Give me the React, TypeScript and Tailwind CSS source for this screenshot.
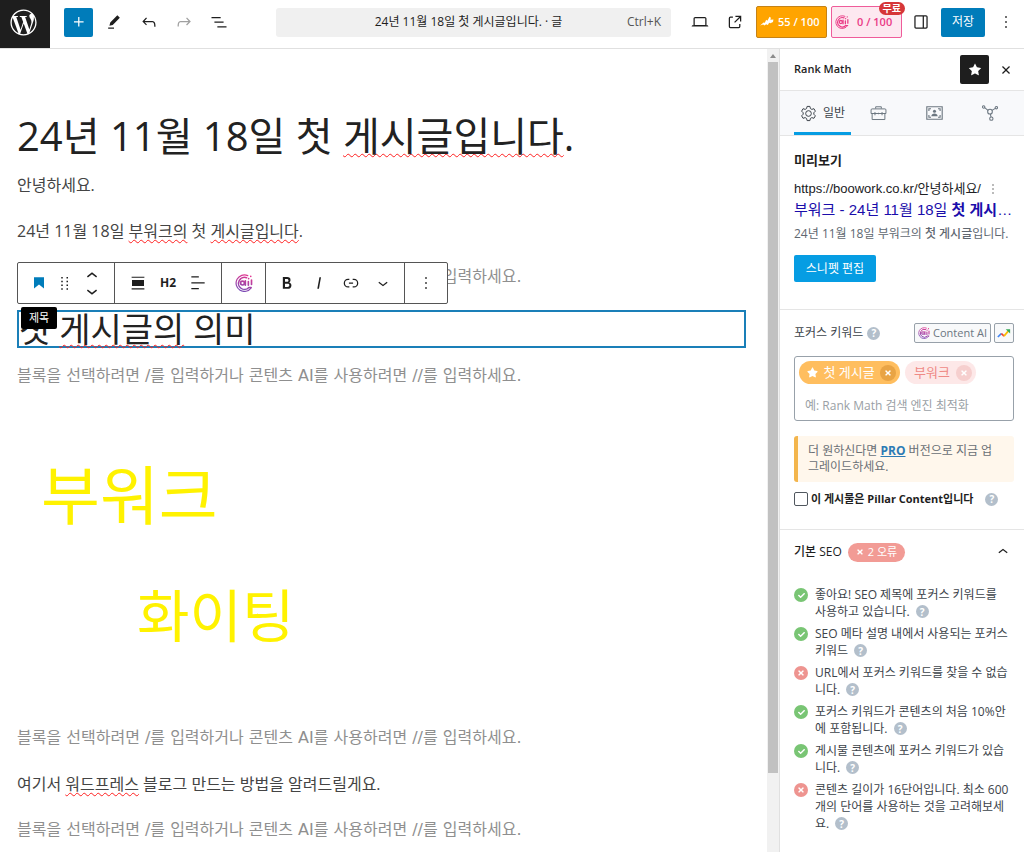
import type { ReactNode } from 'react';
import { FaCheck, FaStar, FaTimes, FaWordpressSimple } from 'react-icons/fa';

const icons = {
  plus: 'M11 12.5V17.5H12.5V12.5H17.5V11H12.5V6H11V11H6V12.5H11Z',
  edit: 'm19 7-3-3-8.5 8.5-1 4 4-1L19 7Zm-7 11.5H5V20h7v-1.5Z',
  undo: 'M18.3 11.7c-.6-.6-1.4-.9-2.3-.9H6.7l2.9-3.3-1.1-1-4.5 5L8.5 16l1-1-2.7-2.7H16c.5 0 .9.2 1.3.5 1 1 1 3.4 1 4.5v.3h1.5v-.2c0-1.5 0-4.3-1.5-5.7z',
  redo: 'M15.6 6.5l-1.1 1 2.9 3.3H8c-.9 0-1.7.3-2.3.9-1.4 1.5-1.4 4.2-1.4 5.6v.2h1.5v-.3c0-1.1 0-3.5 1-4.5.3-.3.7-.5 1.3-.5h9.2L14.5 15l1.1 1.1 4.6-4.6-4.6-5z',
  listView: 'M3 6h11v1.5H3V6Zm3.5 5.5h11V13h-11v-1.5ZM21 17H10v1.5h11V17Z',
  laptop: 'M20.5 16h-.7V8c0-1.1-.9-2-2-2H6.2c-1.1 0-2 .9-2 2v8h-.7c-.8 0-1.5.7-1.5 1.5h20c0-.8-.7-1.5-1.5-1.5zM5.7 8c0-.3.2-.5.5-.5h11.6c.3 0 .5.2.5.5v7.6H5.7V8z',
  external: 'M19.5 4.5h-7V6h4.44l-5.97 5.97 1.06 1.06L18 7.06v4.44h1.5v-7Zm-13 1a2 2 0 0 0-2 2v10a2 2 0 0 0 2 2h10a2 2 0 0 0 2-2v-3H17v3a.5.5 0 0 1-.5.5h-10a.5.5 0 0 1-.5-.5v-10a.5.5 0 0 1 .5-.5h3V5.5h-3Z',
  drawer: 'M18 4H6c-1.1 0-2 .9-2 2v12c0 1.1.9 2 2 2h12c1.1 0 2-.9 2-2V6c0-1.1-.9-2-2-2zm-4 14.5H6c-.3 0-.5-.2-.5-.5V6c0-.3.2-.5.5-.5h8v13zm4.5-.5c0 .3-.2.5-.5.5h-2.5v-13H18c.3 0 .5.2.5.5v12z',
  more: 'M13 19h-2v-2h2v2zm0-6h-2v-2h2v2zm0-6h-2V5h2v2z',
  star: 'M11.776 4.454a.25.25 0 01.448 0l2.069 4.192a.25.25 0 00.188.137l4.626.672a.25.25 0 01.139.426l-3.348 3.263a.25.25 0 00-.072.222l.79 4.607a.25.25 0 01-.362.263l-4.138-2.175a.25.25 0 00-.232 0l-4.138 2.175a.25.25 0 01-.363-.263l.79-4.607a.25.25 0 00-.071-.222L4.754 9.881a.25.25 0 01.139-.426l4.626-.672a.25.25 0 00.188-.137l2.069-4.192z',
  close: 'M12 13.06l3.712 3.713 1.061-1.06L13.061 12l3.712-3.712-1.06-1.06L12 10.938 8.288 7.227l-1.061 1.06L10.939 12l-3.712 3.712 1.06 1.061L12 13.061z',
  heading: 'M6 5V18.5911L12 13.8473L18 18.5911V5H6Z',
  drag: 'M7 6h2V4H7v2zm0 5h2V9H7v2zm0 5h2v-2H7v2zm0 5h2v-2H7v2zm7-17v2h2V4h-2zm0 7h2V9h-2v2zm0 5h2v-2h-2v2zm0 5h2v-2h-2v2z',
  up: 'M6.5 12.4L12 8l5.5 4.4-.9 1.2L12 10l-4.5 3.6-1-1.2z',
  down: 'M17.5 11.6L12 16l-5.5-4.4.9-1.2L12 14l4.5-3.6 1 1.2z',
  align: 'M20.5 5h-17V3.5h17V5ZM20.5 20.5h-17V19h17v1.5ZM4 8h16v8H4V8Z',
  textLeft: 'M13 5.5H4V4h9v1.5Zm7 7H4V11h16v1.5Zm-7 7H4V18h9v1.5Z',
  bold: 'M14.7 11.3c1-.6 1.5-1.6 1.5-3 0-2.3-1.3-3.4-4-3.4H7v14h5.8c1.4 0 2.5-.3 3.3-1 .8-.7 1.2-1.7 1.2-2.9.1-1.9-.8-3.1-2.6-3.7zm-5.1-4h2.3c.6 0 1.1.1 1.4.4.3.3.5.7.5 1.2s-.2 1-.5 1.2c-.3.3-.8.4-1.4.4H9.6V7.3zm4.6 9c-.4.3-1 .4-1.7.4H9.6v-3.9h2.9c.7 0 1.3.2 1.7.5.4.3.6.8.6 1.5s-.2 1.2-.6 1.5z',
  italic: 'M12.5 5L10 19h1.9l2.5-14z',
  link: 'M10 17.389H8.444A5.194 5.194 0 1 1 8.444 7H10v1.5H8.444a3.694 3.694 0 0 0 0 7.389H10v1.5ZM14 7h1.556a5.194 5.194 0 0 1 0 10.39H14v-1.5h1.556a3.694 3.694 0 0 0 0-7.39H14V7Zm-4.5 6h5v-1.5h-5V13Z',
};

function Icon({ name, className = 'size-5' }: { name: keyof typeof icons; className?: string }) {
  return (
    <svg viewBox="0 0 24 24" className={`${className} shrink-0 fill-current`} aria-hidden="true">
      <path d={icons[name]} />
    </svg>
  );
}

function ContentAiIcon({ className, stroke = 'url(#ai-gradient)' }: { className: string; stroke?: string }) {
  return (
    <svg viewBox="0 0 24 24" className={`${className} shrink-0`} fill="none" stroke={stroke} strokeLinecap="round" aria-hidden="true">
      <defs>
        <linearGradient id="ai-gradient" gradientUnits="userSpaceOnUse" x1="16" y1="0" x2="8" y2="24">
          <stop offset="0" stopColor="#e8368f" />
          <stop offset="1" stopColor="#724bb7" />
        </linearGradient>
      </defs>
      <path d="M17 2.2A11 11 0 1 0 21.5 18.5" strokeWidth="1.6" />
      <path d="M15.5 5A8 8 0 1 0 18.5 18h3" strokeWidth="2" />
      <circle cx="10" cy="12" r="2.6" strokeWidth="2.2" />
      <path d="M13.8 9v6M17.8 10v5" strokeWidth="2.2" />
      <path d="M18.2 6.2v.1M21 3.2v.1M22 8v6" strokeWidth="2.2" />
    </svg>
  );
}

function Misspelled({ children }: { children: ReactNode }) {
  return (
    <span className="underline decoration-[#ff2020] decoration-wavy decoration-1 underline-offset-2">{children}</span>
  );
}

function EmptyBlock() {
  return (
    <p className="font-['DejaVu_Sans','Noto_Sans_CJK_KR',sans-serif] text-[#8f8f8f]">
      블록을 선택하려면 /를 입력하거나 콘텐츠 AI를 사용하려면 //를 입력하세요.
    </p>
  );
}

function HelpMark({ className = '' }: { className?: string }) {
  return (
    <button
      type="button"
      aria-label="도움말"
      className={`inline-flex size-[13px] shrink-0 items-center justify-center rounded-full bg-[#b3bfcb] text-[10px] leading-3 font-bold text-white ${className}`}
    >
      ?
    </button>
  );
}

function TopBar() {
  return (
    <header className="flex h-[49px] shrink-0 items-center border-b border-[#e0e0e0] pr-1 pb-1 text-[#1e1e1e]">
      <a href="#dashboard" aria-label="WordPress" className="flex h-12 w-[50px] shrink-0 items-center justify-center self-start bg-[#1e1e1e] pr-1 pb-1 text-white">
        <FaWordpressSimple size={27} />
      </a>
      <div className="ml-[14px] flex items-center gap-[6px]">
        <button type="button" aria-label="블록 삽입" className="flex size-[29px] items-center justify-center rounded-[2px] bg-[#007cba] text-white">
          <Icon name="plus" />
        </button>
        <button type="button" aria-label="도구" className="flex size-[29px] items-center justify-center">
          <Icon name="edit" />
        </button>
        <button type="button" aria-label="실행 취소" className="flex size-[29px] items-center justify-center">
          <Icon name="undo" />
        </button>
        <button type="button" aria-label="다시 실행" disabled className="flex size-[29px] items-center justify-center text-[#a0a0a0]">
          <Icon name="redo" />
        </button>
        <button type="button" aria-label="문서 개요" className="flex size-[29px] items-center justify-center">
          <Icon name="listView" />
        </button>
      </div>
      <button type="button" className="ml-[43px] flex h-[29px] min-w-0 flex-1 items-center rounded-[3px] bg-[#f0f0f0] px-[10px] text-xs">
        <span className="flex-1 truncate pl-6 text-center">24년 11월 18일 첫 게시글입니다. · 글</span>
        <span className="text-[#555]">Ctrl+K</span>
      </button>
      <div className="ml-[14px] flex shrink-0 items-center">
        <button type="button" aria-label="보기" className="flex w-[29px] justify-center">
          <Icon name="laptop" />
        </button>
        <button type="button" aria-label="새 탭에서 보기" className="ml-[6px] flex w-[29px] justify-center">
          <Icon name="external" />
        </button>
        <button type="button" className="ml-[7px] flex h-8 w-[71px] items-center gap-1 rounded-[2px] border border-[#c58216] bg-[#ffa400] pl-[3px] text-[11px] font-semibold text-white">
          <svg viewBox="0 0 16 14" className="h-3 w-[14px] fill-current" aria-hidden="true">
            <path d="M0 11 4 7.5l1.5.5L7 4.5l1.5 1L11 1l1.5 1L12 4.5l3.5-.5-.5 3-3 1.5-1.5-.5L9 10.500l-2-1L5 11l-1.500-1z" />
          </svg>
          <span className="whitespace-nowrap">55 / 100</span>
        </button>
        <button type="button" className="relative ml-1 flex h-8 w-[71px] items-center gap-2 rounded-[2px] border border-[#ef5c9a] bg-[#fde8f0] pl-[3px] text-[11px] font-semibold text-[#ea3a85]">
          <ContentAiIcon className="size-[14px]" stroke="#ea3a85" />
          <span className="whitespace-nowrap">0 / 100</span>
          <span className="absolute -top-[5px] -right-1 rounded-full bg-[#d63638] px-1 text-[10px] leading-[13px] text-white">무료</span>
        </button>
        <button type="button" aria-label="설정" className="ml-1 flex w-[29px] justify-center">
          <Icon name="drawer" />
        </button>
        <button type="button" className="ml-[6px] h-[29px] w-11 rounded-[2px] bg-[#007cba] text-xs text-white">저장</button>
        <button type="button" aria-label="옵션" className="ml-[6px] flex w-[29px] justify-center">
          <Icon name="more" />
        </button>
      </div>
    </header>
  );
}

function BlockToolbar() {
  return (
    <div role="toolbar" aria-label="블록 도구" className="absolute bottom-[42px] -left-[2px] flex h-[42px] divide-x divide-[#555] rounded-[2px] border border-[#555] bg-white text-[#1e1e1e]">
      <div className="flex w-[97px] items-center justify-center gap-[6px]">
        <button type="button" aria-label="제목 블록" className="text-[#007cba]"><Icon name="heading" /></button>
        <button type="button" aria-label="드래그"><Icon name="drag" className="h-[18px] w-5" /></button>
        <div className="flex flex-col">
          <button type="button" aria-label="위로 이동" className="flex h-[15px] items-center overflow-hidden"><Icon name="up" className="size-[22px]" /></button>
          <button type="button" aria-label="아래로 이동" className="flex h-[15px] items-center overflow-hidden"><Icon name="down" className="size-[22px]" /></button>
        </div>
      </div>
      <div className="flex w-[107px] items-center justify-center gap-3">
        <button type="button" aria-label="정렬"><Icon name="align" className="h-[18px] w-5" /></button>
        <button type="button" className="text-xs font-bold">H2</button>
        <button type="button" aria-label="텍스트 정렬"><Icon name="textLeft" /></button>
      </div>
      <div className="flex w-11 items-center justify-center">
        <button type="button" aria-label="Content AI"><ContentAiIcon className="size-[18px]" /></button>
      </div>
      <div className="flex w-[139px] items-center justify-center gap-3">
        <button type="button" aria-label="굵게"><Icon name="bold" /></button>
        <button type="button" aria-label="기울임꼴"><Icon name="italic" /></button>
        <button type="button" aria-label="링크"><Icon name="link" /></button>
        <button type="button" aria-label="더보기"><Icon name="down" /></button>
      </div>
      <div className="flex w-[42px] items-center justify-center">
        <button type="button" aria-label="옵션"><Icon name="more" /></button>
      </div>
    </div>
  );
}

function Editor() {
  return (
    <main className="min-w-0 flex-1 pt-[59px] pr-[21px] pb-2 pl-[17px] text-base leading-[26px] text-[#444]">
      <h1 className="text-[40px] leading-[56px] text-[#222]">
        24년 11월 18일 첫 <Misspelled>게시글입니다</Misspelled>.
      </h1>
      <div className="mt-2 flex flex-col gap-5">
        <p>안녕하세요.</p>
        <p>24년 11월 18일 <Misspelled>부워크의</Misspelled> 첫 <Misspelled>게시글입니다</Misspelled>.</p>
        <EmptyBlock />
      </div>
      <div className="relative mt-5 mb-[15px] border-2 border-[#1a7fb8] text-[#222]">
        <h2 className="text-[34px] leading-[34px]">첫 <Misspelled>게시글의</Misspelled> 의미</h2>
        <BlockToolbar />
        <span className="absolute -top-[5px] left-[2px] rounded-[2px] bg-black px-2 text-[11px] leading-[22px] text-white">제목</span>
      </div>
      <EmptyBlock />
      <figure className="mt-5 flex h-[296px] flex-col pt-[38px] pl-6 text-[#fff200]">
        <span className="text-[64px] leading-[96px]">부워크</span>
        <span className="pt-6 pl-24 text-[57px] leading-[96px]">화이팅</span>
      </figure>
      <div className="mt-5 flex flex-col gap-5">
        <EmptyBlock />
        <p>여기서 <Misspelled>워드프레스</Misspelled> 블로그 만드는 방법을 알려드릴게요.</p>
        <EmptyBlock />
      </div>
    </main>
  );
}

const seoTests = [
  { ok: true, lines: ['좋아요! SEO 제목에 포커스 키워드를', '사용하고 있습니다.'] },
  { ok: true, lines: ['SEO 메타 설명 내에서 사용되는 포커스', '키워드'] },
  { ok: false, lines: ['URL에서 포커스 키워드를 찾을 수 없습', '니다.'] },
  { ok: true, lines: ['포커스 키워드가 콘텐츠의 처음 10%안', '에 포함됩니다.'] },
  { ok: true, lines: ['게시물 콘텐츠에 포커스 키워드가 있습', '니다.'] },
  { ok: false, lines: ['콘텐츠 길이가 16단어입니다. 최소 600', '개의 단어를 사용하는 것을 고려해보세', '요.'] },
];

function Tabs() {
  return (
    <div role="tablist" className="flex h-[45px] items-stretch border-b border-[#e5e5e5] bg-[#f8f9fb] pr-[6px] pl-[14px] text-[#6c7781]">
      <button type="button" role="tab" aria-selected="true" className="flex w-[57px] items-center justify-center gap-[6px] border-b-[3px] border-[#069de3] pt-[3px] text-xs text-[#3c434a]">
        <svg viewBox="0 0 24 24" className="size-[17px]" fill="none" stroke="currentColor" strokeWidth="1.4" strokeLinejoin="round" aria-hidden="true">
          <path d="M10 2h4l.7 3 2 1.2 3-1 2 3.5-2.2 2.300v2l2.200 2.300-2 3.500-3-1-2 1.200L14 22h-4l-.7-3-2-1.200-3 1-2-3.500L4.500 13v-2L2.300 8.700l2-3.500 3 1 2-1.200z" />
          <circle cx="12" cy="12" r="4" />
        </svg>
        일반
      </button>
      <button type="button" role="tab" aria-label="고급" className="flex flex-1 items-center justify-center">
        <svg viewBox="0 0 24 24" className="size-[17px]" fill="none" stroke="currentColor" strokeWidth="1.4" aria-hidden="true">
          <path d="M3 5.5h18A1.5 1.5 0 0 1 22.5 7v5h-21V7A1.5 1.5 0 0 1 3 5.5zM3 12v8.5h18V12M8 5V2.5h8V5M7 10v4.5M17 10v4.5M12 11v2" />
        </svg>
      </button>
      <button type="button" role="tab" aria-label="스키마" className="flex flex-1 items-center justify-center">
        <svg viewBox="0 0 24 20" className="h-[14px] w-[17px]" fill="none" stroke="currentColor" strokeWidth="1.6" aria-hidden="true">
          <path d="M1 1h22v18H1zM4 7V4h3M17 4h3v3M20 13v3h-3M7 16H4v-3" />
          <path d="M7.5 14.5c0-5 9-5 9 0z" fill="currentColor" stroke="none" />
          <circle cx="12" cy="7.5" r="2.2" fill="currentColor" stroke="none" />
        </svg>
      </button>
      <button type="button" role="tab" aria-label="소셜" className="flex flex-1 items-center justify-center">
        <svg viewBox="0 0 24 24" className="size-4" fill="none" stroke="currentColor" strokeWidth="1.6" aria-hidden="true">
          <circle cx="12" cy="10" r="3.5" />
          <circle cx="14" cy="20.5" r="2.5" />
          <circle cx="21.5" cy="4" r="1.8" />
          <circle cx="2.5" cy="3" r="1.8" />
          <path d="M4 4l5 4M15 8l5-3M12.5 13.5l1 4.5" />
        </svg>
      </button>
    </div>
  );
}

function Sidebar() {
  return (
    <aside className="w-[245px] shrink-0 border-l border-[#e0e0e0] text-xs text-[#3c434a]">
      <div className="flex h-[42px] items-center border-b border-[#e5e5e5] pr-2 pl-[14px]">
        <h2 className="flex-1 text-[11px] font-semibold text-[#1e1e1e]">Rank Math</h2>
        <button type="button" aria-label="고정" className="flex size-[29px] items-center justify-center rounded-[2px] bg-[#1e1e1e] text-white">
          <Icon name="star" />
        </button>
        <button type="button" aria-label="닫기" className="ml-[7px] text-[#1e1e1e]"><Icon name="close" /></button>
      </div>
      <Tabs />

      <section className="h-[174px] border-b border-[#e5e5e5] pt-[14px] pr-[11px] pl-[14px]">
        <h3 className="text-[13px] leading-5 font-bold text-[#1e1e1e]">미리보기</h3>
        <div className="mt-[10px] flex items-center gap-1 font-['Liberation_Sans','Noto_Sans_CJK_KR',sans-serif] text-[13px] leading-[18px] text-[#202124]">
          <span className="whitespace-nowrap">https://boowork.co.kr/안녕하세요/</span>
          <button type="button" aria-label="미리보기 옵션" className="text-[#777]"><Icon name="more" className="size-4" /></button>
        </div>
        <a href="#preview" className="block truncate font-['Liberation_Sans','Noto_Sans_CJK_KR',sans-serif] text-[15px] leading-6 text-[#1a0dab]">
          부워크 - 24년 11월 18일 <b>첫 게시글</b>입니다.
        </a>
        <p className="leading-6 whitespace-nowrap text-[#606770]">24년 11월 18일 부워크의 <b className="font-medium">첫 게시글</b>입니다.</p>
        <button type="button" className="mt-[9px] h-[27px] w-[82px] rounded-[2px] bg-[#069de3] text-white">스니펫 편집</button>
      </section>

      <section className="h-[220px] border-b border-[#e5e5e5] pt-[13px] pr-[10px] pl-[14px]">
        <div className="flex items-center">
          <label htmlFor="keyword">포커스 키워드</label>
          <HelpMark className="ml-1" />
          <button type="button" className="ml-auto flex h-5 w-[77px] items-center justify-center gap-[3px] rounded-[2px] border border-[#98a1aa] bg-[#f8f9fa] text-[11px] text-[#6c7781]">
            <ContentAiIcon className="size-3" />
            Content AI
          </button>
          <button type="button" aria-label="Trends" className="ml-[3px] flex size-5 items-center justify-center rounded-[2px] border border-[#98a1aa] bg-[#f8f9fa]">
            <svg viewBox="0 0 16 12" className="h-[11px] w-[14px]" fill="none" strokeWidth="2" strokeLinejoin="round" aria-hidden="true">
              <path d="M1 10l4-4" stroke="#4285f4" />
              <path d="M5 6l3 3" stroke="#ea4335" />
              <path d="M8 9l5-6" stroke="#fbbc04" />
              <path d="M10 1h5v5z" fill="#34a853" />
            </svg>
          </button>
        </div>
        <div className="mt-[13px] h-[65px] rounded-[3px] border border-[#98a1aa] p-1">
          <div className="flex gap-[5px] text-[13px] leading-[23px]">
            <span className="flex h-[23px] w-[101px] items-center justify-between rounded-full bg-[#ffbe5f] pr-1 pl-2 text-white">
              <FaStar size={11} />
              첫 게시글
              <button type="button" aria-label="첫 게시글 삭제" className="flex size-4 items-center justify-center rounded-full bg-[#e9a445]"><FaTimes size={8} /></button>
            </span>
            <span className="flex h-[23px] w-[71px] items-center justify-between rounded-full bg-[#fde8e8] pr-1 pl-[9px] text-[#ef8a86]">
              부워크
              <button type="button" aria-label="부워크 삭제" className="flex size-4 items-center justify-center rounded-full bg-[#f6cfce] text-white"><FaTimes size={8} /></button>
            </span>
          </div>
          <input id="keyword" placeholder="예: Rank Math 검색 엔진 최적화" className="mt-3 w-full px-[6px] text-xs leading-5 outline-none placeholder:text-[#9a9fa5]" />
        </div>
        <p className="mt-[15px] rounded-[3px] border-l-4 border-[#f3b54c] bg-[#fff7ec] py-[7px] pl-[10px] leading-4 whitespace-nowrap text-[#6a6f75]">
          더 원하신다면 <a href="#pro" className="font-bold text-[#2d7bb5] underline">PRO</a> 버전으로 지금 업
          <br />
          그레이드하세요.
        </p>
        <div className="mt-2 flex items-center">
          <input id="pillar" type="checkbox" className="size-[14px] shrink-0 appearance-none rounded-[2px] border border-[#50575e] bg-white" />
          <label htmlFor="pillar" className="ml-[3px] text-[11px] leading-[18px] font-bold whitespace-nowrap text-[#1e1e1e]">이 게시물은 Pillar Content입니다</label>
          <HelpMark className="ml-3" />
        </div>
      </section>

      <section className="pt-3 pr-[11px] pl-[14px]">
        <h3>
          <button type="button" aria-expanded="true" className="flex w-full items-center leading-[18px] text-[#1e1e1e]">
            <span className="font-medium">기본 SEO</span>
            <span className="ml-[6px] flex h-[19px] items-center gap-1 rounded-full bg-[#f29b95] px-2 text-[11px] text-white"><FaTimes size={8} />2 오류</span>
            <Icon name="up" className="ml-auto size-5" />
          </button>
        </h3>
        <ul className="mt-6 flex flex-col gap-[5px] text-[#3c434a]">
          {seoTests.map((test) => (
            <li key={test.lines[0]} className="flex gap-[7px] leading-[17px]">
              <span className={test.ok ? 'mt-[2px] flex size-[14px] shrink-0 items-center justify-center rounded-full bg-[#79c574] text-white' : 'mt-[2px] flex size-[14px] shrink-0 items-center justify-center rounded-full bg-[#ee9490] text-white'}>
                {test.ok ? <FaCheck size={7} /> : <FaTimes size={8} />}
              </span>
              <div className="whitespace-nowrap">
                {test.lines.map((line, index) => (
                  <div key={line} className="flex items-center">
                    {line}
                    {index === test.lines.length - 1 && <HelpMark className="ml-[6px]" />}
                  </div>
                ))}
              </div>
            </li>
          ))}
        </ul>
      </section>
    </aside>
  );
}

export default function App() {
  return (
    <div lang="ko" className="flex min-h-screen flex-col bg-white font-['Open_Sans','Noto_Sans_CJK_KR',sans-serif]">
      <TopBar />
      <div className="flex flex-1">
        <Editor />
        <div className="flex w-3 shrink-0 flex-col bg-[#f1f1f1]" aria-hidden="true">
          <svg viewBox="0 0 12 13" className="h-[13px] w-3 fill-[#8b8b8b]"><path d="M6 5 9 9H3z" /></svg>
          <div className="mx-px flex-[9] bg-[#c1c1c1]" />
          <div className="flex-1" />
        </div>
        <Sidebar />
      </div>
    </div>
  );
}
